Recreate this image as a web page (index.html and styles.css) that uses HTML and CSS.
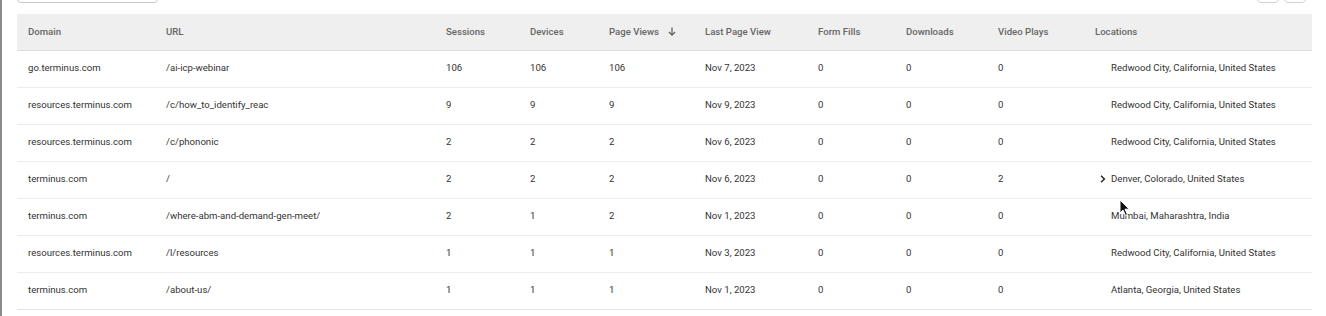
FILE: index.html
```html
<!DOCTYPE html>
<html lang="en">
<head>
  <meta charset="UTF-8" />
  <meta name="viewport" content="width=device-width, initial-scale=1.0"/>
  <title>Page Activity</title>
  <link rel="stylesheet" href="styles.css">
</head>
<body>

  <div class="page">
    <div class="toolbar">
      <div class="search-box"></div>
      <div class="pager">
        <span class="pager-btn"></span>
        <span class="pager-btn"></span>
      </div>
    </div>

    <table class="activity">
      <colgroup>
        <col style="width:138px"><col style="width:280px"><col style="width:84px">
        <col style="width:79px"><col style="width:96px"><col style="width:113px">
        <col style="width:88px"><col style="width:92px"><col style="width:97px">
        <col style="width:228px">
      </colgroup>
      <thead>
        <tr>
          <th>Domain</th>
          <th>URL</th>
          <th>Sessions</th>
          <th>Devices</th>
          <th>Page Views
            <svg class="sort" width="8" height="9" viewBox="0 0 8 9"><path d="M4 0.5 V8 M0.9 5 L4 8 L7.1 5" fill="none" stroke="#666" stroke-width="1.3"/></svg>
          </th>
          <th>Last Page View</th>
          <th>Form Fills</th>
          <th>Downloads</th>
          <th>Video Plays</th>
          <th>Locations</th>
        </tr>
      </thead>
      <tbody>
        <tr>
          <td>go.terminus.com</td><td>/ai-icp-webinar</td><td>106</td><td>106</td><td>106</td>
          <td>Nov 7, 2023</td><td>0</td><td>0</td><td>0</td>
          <td class="loc">Redwood City, California, United States</td>
        </tr>
        <tr>
          <td>resources.terminus.com</td><td>/c/how_to_identify_reac</td><td>9</td><td>9</td><td>9</td>
          <td>Nov 9, 2023</td><td>0</td><td>0</td><td>0</td>
          <td class="loc">Redwood City, California, United States</td>
        </tr>
        <tr>
          <td>resources.terminus.com</td><td>/c/phononic</td><td>2</td><td>2</td><td>2</td>
          <td>Nov 6, 2023</td><td>0</td><td>0</td><td>0</td>
          <td class="loc">Redwood City, California, United States</td>
        </tr>
        <tr>
          <td>terminus.com</td><td>/</td><td>2</td><td>2</td><td>2</td>
          <td>Nov 6, 2023</td><td>0</td><td>0</td><td>2</td>
          <td class="loc has-more"><svg class="chevron" width="6" height="8" viewBox="0 0 6 8"><path d="M1 0.8 L4.4 4 L1 7.2" fill="none" stroke="#222" stroke-width="1.4"/></svg>Denver, Colorado, United States</td>
        </tr>
        <tr>
          <td>terminus.com</td><td>/where-abm-and-demand-gen-meet/</td><td>2</td><td>1</td><td>2</td>
          <td>Nov 1, 2023</td><td>0</td><td>0</td><td>0</td>
          <td class="loc">Mumbai, Maharashtra, India</td>
        </tr>
        <tr>
          <td>resources.terminus.com</td><td>/l/resources</td><td>1</td><td>1</td><td>1</td>
          <td>Nov 3, 2023</td><td>0</td><td>0</td><td>0</td>
          <td class="loc">Redwood City, California, United States</td>
        </tr>
        <tr>
          <td>terminus.com</td><td>/about-us/</td><td>1</td><td>1</td><td>1</td>
          <td>Nov 1, 2023</td><td>0</td><td>0</td><td>0</td>
          <td class="loc">Atlanta, Georgia, United States</td>
        </tr>
      </tbody>
    </table>

    <!-- mouse pointer caught in the capture -->
    <svg class="cursor" width="12" height="18" viewBox="0 0 12 18">
      <path d="M1 1 L1 14 L4 11 L6.5 16.5 L8.5 15.6 L6 10.2 L10.3 10.2 Z" fill="#111" stroke="#fff" stroke-width="1"/>
    </svg>
  </div>

</body>
</html>
```

FILE: styles.css
```css
* {
  box-sizing: border-box;
  margin: 0;
  padding: 0;
}

body {
  background: #ffffff;
  font-family: Roboto, "Liberation Sans", sans-serif;
  color: #333;
  overflow: hidden;
}

.page {
  display: flow-root;
  position: relative;
  height: 316px;
  border-left: 2px solid #8a8a8a;
  padding: 0 14px 0 15px;
}

.toolbar {
  display: flex;
  justify-content: space-between;
  align-items: flex-start;
  height: 24px;
  margin-top: -10px;
}

.search-box {
  width: 141px;
  height: 13px;
  border: 1px solid #c9c9c9;
  border-radius: 0 0 4px 4px;
}

.pager {
  display: flex;
  gap: 5px;
  margin-right: 6px;
}

.pager-btn {
  width: 22px;
  height: 13px;
  border: 1px solid #d2d2d2;
  border-radius: 0 0 4px 4px;
}

.activity {
  width: 1295px;
  border-collapse: collapse;
  table-layout: fixed;
  font-size: 9.6px;
}

.activity th {
  background: #efefef;
  color: #666;
  font-weight: 500;
  text-align: left;
  height: 36px;
  padding: 0 0 0 11px;
  border-bottom: 1px solid #dedede;
  white-space: nowrap;
}

.sort {
  margin-left: 7px;
  vertical-align: -1px;
}

.activity td {
  height: 37px;
  padding: 0 0 2px 11px;
  border-bottom: 1px solid #ececec;
  color: #333;
  white-space: nowrap;
  overflow: hidden;
}

.activity td.loc {
  padding-left: 27px;
}

.activity td.has-more {
  padding-left: 16px;
}

.chevron {
  margin-right: 5px;
  vertical-align: -0.5px;
}

.activity tbody tr:last-child td {
  border-bottom: 1px solid #e4e4e4;
  box-shadow: 0 3px 4px -2px rgba(0,0,0,0.06);
}

.cursor {
  position: absolute;
  left: 1117px;
  top: 199px;
}
```
